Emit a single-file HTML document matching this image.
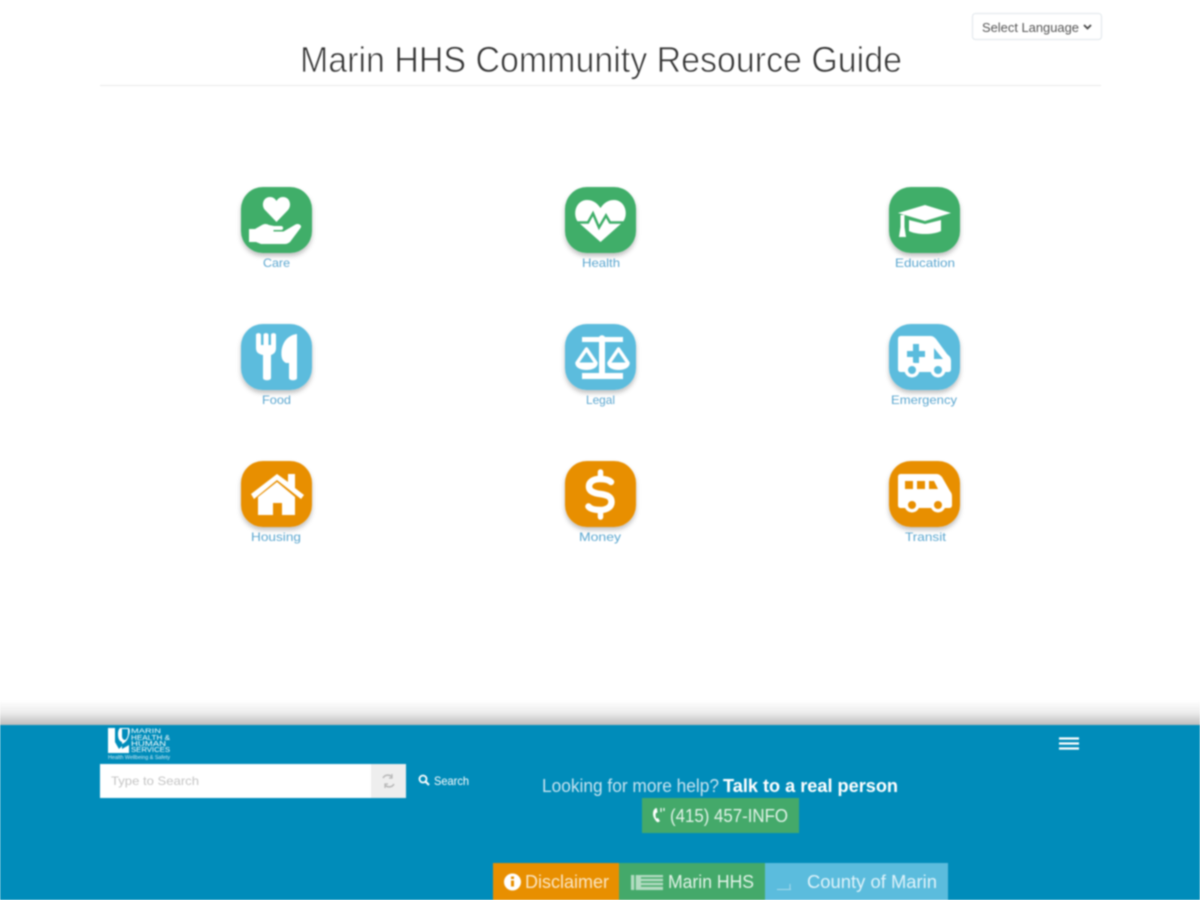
<!DOCTYPE html>
<html lang="en">
<head>
<meta charset="utf-8">
<title>Marin HHS Community Resource Guide</title>
<style>
html,body{margin:0;padding:0;background:#fff;width:1200px;height:900px;overflow:hidden}
svg{display:block;filter:blur(.8px)}
text{font-family:"Liberation Sans",sans-serif}
.l{font-size:12px;fill:#5ba6cf;text-anchor:start}
</style>
</head>
<body>
<svg width="1200" height="900" viewBox="0 0 1200 900" xmlns="http://www.w3.org/2000/svg">
<defs>
<linearGradient id="sh" x1="0" y1="0" x2="0" y2="1">
<stop offset="0" stop-color="#fff"/>
<stop offset=".5" stop-color="#ededed"/>
<stop offset="1" stop-color="#bdbdbd"/>
</linearGradient>
<filter id="ds" x="-20%" y="-20%" width="140%" height="150%">
<feDropShadow dx="0" dy="3" stdDeviation="2.5" flood-color="#000" flood-opacity=".25"/>
</filter>
</defs>
<rect width="1200" height="900" fill="#fff"/>

<!-- Header -->
<text x="300" y="72" font-size="36" fill="#333" stroke="#fff" stroke-width=".8" textLength="602" lengthAdjust="spacingAndGlyphs">Marin HHS Community Resource Guide</text>
<rect x="100" y="85" width="1001" height="1" fill="#e9e9e9"/>
<rect x="972.500" y="13.500" width="129" height="26" rx="3" fill="#fff" stroke="#dfe5ea"/>
<text x="982" y="32" font-size="13" fill="#555" textLength="97" lengthAdjust="spacingAndGlyphs">Select Language</text>
<path d="M1084 25l3.500 3.500 3.500-3.500" fill="none" stroke="#444" stroke-width="1.800"/>

<!-- Care -->
<g transform="translate(241 187)">
<rect width="71" height="66" rx="22" fill="#3fae69" filter="url(#ds)"/>
<path d="M35.500 35L24 23C20 18.500 22 10 29 10c3 0 5 1.500 6.500 4 1.500-2.500 3.500-4 6.500-4 7 0 9 8.500 5 13z" fill="#fff"/>
<path d="M8 42h6l7-4c3-1.500 5-1 7 0l5 1h7c2.500 0 3 3.500 .5 4h-8v1.500h10l12-7c3-1.500 7 1 5 3.500L49 55c-1.500 1-3 2-5 2H20l-5-2H8z" fill="#fff"/>
</g>
<text class="l" x="263" y="267" textLength="27" lengthAdjust="spacingAndGlyphs">Care</text>

<!-- Health -->
<g transform="translate(565 187)">
<rect width="71" height="66" rx="22" fill="#3fae69" filter="url(#ds)"/>
<path d="M35.500 55L13 35C7 27 11 13 22 13c6 0 10 3 13.500 8 3.500-5 7.500-8 13.500-8 11 0 15 14 9 22z" fill="#fff"/>
<path d="M11 35.500h12l5-9 6 14 7-12 4 7h15" fill="none" stroke="#3fae69" stroke-width="2.500"/>
</g>
<text class="l" x="582" y="267" textLength="38" lengthAdjust="spacingAndGlyphs">Health</text>

<!-- Education -->
<g transform="translate(889 187)">
<rect width="71" height="66" rx="22" fill="#3fae69" filter="url(#ds)"/>
<path d="M9 26l27-8 26 8-26 8z" fill="#fff"/>
<path d="M20 33l16 4 16-4v11c-4 2-10 3-16 3s-12-1-16-3z" fill="#fff"/>
<path d="M11.500 28h4v12l1.500 10h-7L11.500 40z" fill="#fff"/>
</g>
<text class="l" x="895" y="267" textLength="60" lengthAdjust="spacingAndGlyphs">Education</text>

<!-- Food -->
<g transform="translate(241 324)">
<rect width="71" height="66" rx="22" fill="#5bbcdd" filter="url(#ds)"/>
<path d="M15 11c0-2.500 5-2.500 5 0v10h2.500V11c0-2.500 5-2.500 5 0v10H30V11c0-2.500 5-2.500 5 0v13c0 4-2 6-5 7v23c0 3-8 3-8 0V31c-5-1-7-3-7-7z" fill="#fff"/>
<path d="M56 10v44c0 3-8 3-8 0V39h-3c-4-2-5-6-4.500-12C41.500 18 47 11 56 10z" fill="#fff"/>
</g>
<text class="l" x="262" y="404" textLength="29" lengthAdjust="spacingAndGlyphs">Food</text>

<!-- Legal -->
<g transform="translate(565 324)">
<rect width="71" height="66" rx="22" fill="#5bbcdd" filter="url(#ds)"/>
<path d="M17 13h17a3.500 3.500 0 0 1 6 0h18v5H40v31h18v6H17v-6h17V18H17z" fill="#fff"/>
<path d="M21.500 25L12 39c0 7 19 7 19 0z" fill="none" stroke="#fff" stroke-width="3.500" stroke-linejoin="round"/>
<path d="M53.500 25L44 39c0 7 19 7 19 0z" fill="none" stroke="#fff" stroke-width="3.500" stroke-linejoin="round"/>
<path d="M12 38.500h19c-1 6-18 6-19 0zM44 38.500h19c-1 6-18 6-19 0z" fill="#fff"/>
</g>
<text class="l" x="586" y="404" textLength="29" lengthAdjust="spacingAndGlyphs">Legal</text>

<!-- Emergency -->
<g transform="translate(889 324)">
<rect width="71" height="66" rx="22" fill="#5bbcdd" filter="url(#ds)"/>
<path d="M12 12h29c3 0 4 1 6 3l11 15c2 2 4 3 4 7v8c0 2-1 3-3 3H12c-2 0-3-1-3-3V15c0-2 1-3 3-3z" fill="#fff"/>
<path d="M24 20h6v7h6v6h-6v6h-6v-6h-6v-6h6z" fill="#5bbcdd"/>
<path d="M45 24v11h9z" fill="#5bbcdd"/>
<circle cx="23" cy="46" r="7.500" fill="#fff"/><circle cx="23" cy="46" r="4" fill="#5bbcdd"/>
<circle cx="49" cy="46" r="7.500" fill="#fff"/><circle cx="49" cy="46" r="4" fill="#5bbcdd"/>
</g>
<text class="l" x="891" y="404" textLength="66" lengthAdjust="spacingAndGlyphs">Emergency</text>

<!-- Housing -->
<g transform="translate(241 461)">
<rect width="71" height="66" rx="22" fill="#e88f00" filter="url(#ds)"/>
<path d="M10 33L36 13l11 8v-8h7v14l9 7-3 4-24-19-23 19z" fill="#fff"/>
<path d="M17 36l19-15 18 15v18H41V42h-9v12H17z" fill="#fff"/>
</g>
<text class="l" x="251" y="541" textLength="50" lengthAdjust="spacingAndGlyphs">Housing</text>

<!-- Money -->
<g transform="translate(565 461)">
<rect width="71" height="66" rx="22" fill="#e88f00" filter="url(#ds)"/>
<path d="M46 21c-2-2-6-3-11-3-7 0-11 3-11 7.500S28 32 35.500 33s11 3 11 8-5 8-11 8c-5 0-10-1-12-3.500" fill="none" stroke="#fff" stroke-width="6.500" stroke-linecap="round"/>
<path d="M35.500 11v6M35.500 49v7" stroke="#fff" stroke-width="5.500" stroke-linecap="round"/>
</g>
<text class="l" x="579" y="541" textLength="42" lengthAdjust="spacingAndGlyphs">Money</text>

<!-- Transit -->
<g transform="translate(889 461)">
<rect width="71" height="66" rx="22" fill="#e88f00" filter="url(#ds)"/>
<path d="M12 13h35c3 0 4 1 6 3l8 14c1.500 2 2 3 2 6v8c0 2-1 3-3 3H12c-2 0-3-1-3-3V16c0-2 1-3 3-3z" fill="#fff"/>
<path d="M16 20h8v8h-8zM28 20h8v8h-8zM40 20h5l4 8h-9z" fill="#e88f00"/>
<circle cx="23" cy="44" r="7.500" fill="#fff"/><circle cx="23" cy="44" r="4" fill="#e88f00"/>
<circle cx="49" cy="44" r="7.500" fill="#fff"/><circle cx="49" cy="44" r="4" fill="#e88f00"/>
</g>
<text class="l" x="905" y="541" textLength="41" lengthAdjust="spacingAndGlyphs">Transit</text>

<!-- Footer -->
<rect x="0" y="700" width="1200" height="25" fill="url(#sh)"/>
<rect x="0" y="725" width="1200" height="175" fill="#008cba"/>

<!-- Logo -->
<path d="M108 728h7v14l4 7 3-3v-4c-3-1-4-4-4-8 0-3 1-5 2-6h9c1 2 1 4 0 7-1 5-4 8-7 9v5l7-4v8h-21z" fill="#fff"/>
<path d="M122 729v7c0 2 1 4 3 4 2-1 3-4 3-7v-4z" fill="#008cba"/>
<text x="131" y="733" font-size="6" fill="#fff" font-family="Liberation Serif" textLength="30" lengthAdjust="spacingAndGlyphs">MARIN</text>
<text x="131" y="740" font-size="7" fill="#fff" font-family="Liberation Serif" textLength="39" lengthAdjust="spacingAndGlyphs">HEALTH &amp;</text>
<text x="131" y="746" font-size="7" fill="#fff" font-family="Liberation Serif" textLength="35" lengthAdjust="spacingAndGlyphs">HUMAN</text>
<text x="131" y="752" font-size="7" fill="#fff" font-family="Liberation Serif" textLength="39" lengthAdjust="spacingAndGlyphs">SERVICES</text>
<text x="108" y="759" font-size="5" fill="#cfeaf5" textLength="62" lengthAdjust="spacingAndGlyphs">Health Wellbeing &amp; Safety</text>

<!-- Search -->
<rect x="100" y="764" width="271" height="34" fill="#fff"/>
<rect x="371" y="764" width="35" height="34" fill="#eeeeee"/>
<text x="111" y="785" font-size="12" fill="#c4c4c4" textLength="88" lengthAdjust="spacingAndGlyphs">Type to Search</text>
<path d="M383 778a5.500 5.500 0 0 1 9-1M394 784a5.500 5.500 0 0 1-9 1" fill="none" stroke="#b5b5b5" stroke-width="1.500"/>
<path d="M392 774v4h-3M385 788v-4h3" fill="none" stroke="#b5b5b5" stroke-width="1.200"/>
<circle cx="423" cy="779" r="3.500" fill="none" stroke="#fff" stroke-width="1.800"/>
<path d="M425.500 781.500l3.500 3.500" stroke="#fff" stroke-width="2"/>
<text x="434" y="785" font-size="12" fill="#fff" textLength="35" lengthAdjust="spacingAndGlyphs">Search</text>

<!-- Hamburger -->
<path d="M1059 738.500h20M1059 743.500h20M1059 748.500h20" stroke="#fff" stroke-width="2.200"/>

<!-- Help -->
<text x="542" y="792" font-size="18" fill="#c7e3f0" textLength="177" lengthAdjust="spacingAndGlyphs">Looking for more help?</text>
<text x="723" y="792" font-size="18" font-weight="bold" fill="#fff" textLength="175" lengthAdjust="spacingAndGlyphs">Talk to a real person</text>
<rect x="642" y="798" width="157" height="35" fill="#44a96a"/>
<path d="M656 808c-2 1-3 3-3 6s2 6 4 8c1 .5 2 0 3-1l-2-3-1.500 .5c-1-1-1.200-4-.5-5.500l1.500-.5-.5-4z" fill="#fff"/>
<path d="M661 808v4M664 808v3" stroke="#fff" stroke-width="1.200"/>
<text x="670" y="822" font-size="18" fill="#e3f3e8" textLength="118" lengthAdjust="spacingAndGlyphs">(415) 457-INFO</text>

<!-- Bottom buttons -->
<rect x="493" y="863" width="126" height="37" fill="#e88f00"/>
<rect x="619" y="863" width="146" height="37" fill="#44a96a"/>
<rect x="765" y="863" width="183" height="37" fill="#5bbcdd"/>
<circle cx="512.500" cy="882" r="8.500" fill="#fff"/>
<path d="M511 880.500h3v6h-3zM511 876.500h3v2.500h-3z" fill="#e88f00"/>
<text x="525" y="888" font-size="18" fill="#fbe6c4" textLength="84" lengthAdjust="spacingAndGlyphs">Disclaimer</text>
<path d="M631 875h32v15h-32z" fill="#cfe9d8" opacity=".8"/>
<path d="M635 875v15M641 878h22M641 882h22M641 886h22" stroke="#44a96a" stroke-width="1.500"/>
<text x="668" y="888" font-size="18" fill="#e3f3e8" textLength="86" lengthAdjust="spacingAndGlyphs">Marin HHS</text>
<path d="M777 889.500h14M790 884v5" stroke="#a9dbed" stroke-width="1"/>
<text x="807" y="888" font-size="18" fill="#e0f3fa" textLength="130" lengthAdjust="spacingAndGlyphs">County of Marin</text>
</svg>
</body>
</html>
